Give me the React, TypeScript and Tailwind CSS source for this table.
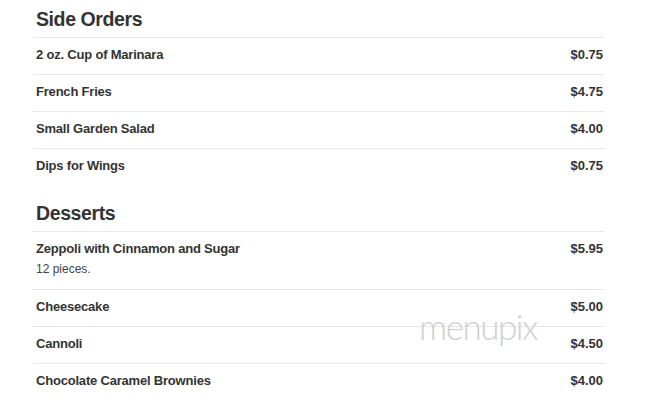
const sections = [
  {
    title: "Side Orders",
    items: [
      { name: "2 oz. Cup of Marinara", price: "$0.75" },
      { name: "French Fries", price: "$4.75" },
      { name: "Small Garden Salad", price: "$4.00" },
      { name: "Dips for Wings", price: "$0.75" },
    ],
  },
  {
    title: "Desserts",
    items: [
      { name: "Zeppoli with Cinnamon and Sugar", price: "$5.95", desc: "12 pieces." },
      { name: "Cheesecake", price: "$5.00" },
      { name: "Cannoli", price: "$4.50" },
      { name: "Chocolate Caramel Brownies", price: "$4.00" },
    ],
  },
];

const App = () => {
  return (
    <div className="relative w-[655px] h-[416px] overflow-hidden bg-white font-['Liberation_Sans',Arial,sans-serif] text-[#333]">
      <div className="ml-[33px] w-[571px]">
        {sections.map((section, i) => (
          <div key={section.title} className={i > 0 ? "mt-[9px]" : ""}>
            <h2 className="pt-[7px] pb-[6px] pl-[3px] text-[19.5px] leading-[24px] font-bold tracking-[-0.4px]">
              {section.title}
            </h2>
            {section.items.map((item) => (
              <div key={item.name} className="border-t border-[#e6e6e6] pt-[8px] pb-[11px] pl-[3px]">
                <div className="flex justify-between text-[13px] leading-[17px] font-bold">
                  <span className="tracking-[-0.2px]">{item.name}</span>
                  <span className="pr-[1px]">{item.price}</span>
                </div>
                {item.desc && (
                  <div className="mt-[4px] text-[12px] leading-[17px] text-[#444]">{item.desc}</div>
                )}
              </div>
            ))}
          </div>
        ))}
      </div>

      {/* watermark */}
      <div className="absolute left-[419px] top-[306px] font-['Lato',sans-serif] font-light text-[35px] leading-[40px] tracking-[-1.5px] text-[#d0d0d0]">
        menupix
      </div>
    </div>
  );
};

export default App;
